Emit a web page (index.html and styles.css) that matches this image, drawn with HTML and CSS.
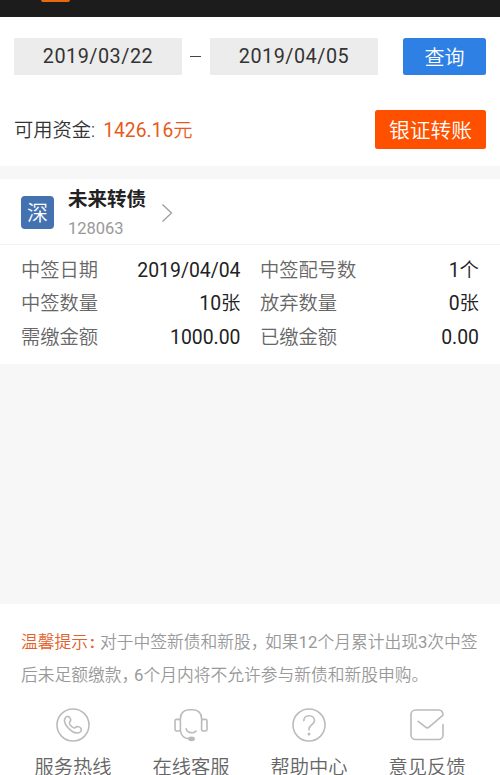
FILE: index.html
```html
<!DOCTYPE html>
<html lang="zh-CN">
<head>
<meta charset="utf-8">
<title>中签查询</title>
<link rel="stylesheet" href="styles.css">
</head>
<body>
<header class="topbar"><span class="topbar-mark"></span></header>
<main>
  <section class="query">
    <div class="dates">
      <span class="date">2019/03/22</span>
      <span class="dash"></span>
      <span class="date">2019/04/05</span>
      <button class="btn btn-query">查询</button>
    </div>
    <div class="funds">
      <span class="funds-label">可用资金:</span>
      <span class="funds-value"><span class="num">1426.16</span>元</span>
      <button class="btn btn-transfer">银证转账</button>
    </div>
  </section>
  <section class="card">
    <div class="stock">
      <span class="market">深</span>
      <div class="stock-text">
        <span class="stock-name">未来转债</span>
        <span class="stock-code">128063</span>
      </div>
      <svg class="chevron" width="12" height="20" viewBox="0 0 12 20"><path d="M1.5 1.5 10.5 10 1.5 18.5"/></svg>
    </div>
    <div class="details">
      <div class="item"><span>中签日期</span><b><span class="num">2019/04/04</span></b></div>
      <div class="item"><span>中签配号数</span><b><span class="num">1</span>个</b></div>
      <div class="item"><span>中签数量</span><b><span class="num">10</span>张</b></div>
      <div class="item"><span>放弃数量</span><b><span class="num">0</span>张</b></div>
      <div class="item"><span>需缴金额</span><b><span class="num">1000.00</span></b></div>
      <div class="item"><span>已缴金额</span><b><span class="num">0.00</span></b></div>
    </div>
  </section>
</main>
<footer class="footer">
  <p class="tip"><span class="tip-title">温馨提示<i>:</i></span>对于中签新债和新股<span class="comma">，</span>如果<span class="num">12</span>个月累计出现<span class="num">3</span>次中签<br>后未足额缴款<span class="comma comma-tight">，</span><span class="num">6</span>个月内将不允许参与新债和新股申购。</p>
  <nav class="links">
    <a class="link">
      <svg width="36" height="36" viewBox="0 0 36 36"><circle cx="18" cy="18" r="16"/><path d="M10.2 10.8C11.2 9.2 13.6 8.8 14.8 10.6 16 12.3 16.2 13.5 14.9 14.8 14 15.8 14.2 16.6 15.1 17.9 16.2 19.5 17.6 20.6 19 21 20.2 21.3 20.7 19.9 22 19.6 23.5 19.4 25.7 20.7 26.3 22.2 26.8 24 24.8 25.8 22.8 26 19.4 26.2 15.2 23.5 12.6 20.3 10.2 17.3 8.6 13.4 10.2 10.8Z"/></svg>
      <span>服务热线</span>
    </a>
    <a class="link">
      <svg width="36" height="36" viewBox="0 0 36 36"><rect x="2" y="12.4" width="5.4" height="11.6" rx="1.6"/><rect x="28.6" y="12.4" width="5.4" height="11.6" rx="1.6"/><path d="M7.4 13V11.5C7.4 6.3 11 2.7 15.8 2.7H20.2C25 2.7 28.6 6.3 28.6 11.5V13M7.4 23.5C8.1 28.4 11 31.5 16 31.8"/><path d="M13.2 21.8C14.2 26.4 21.4 26.7 23 24"/><ellipse class="mic" cx="18.5" cy="31.8" rx="2.7" ry="1.6"/></svg>
      <span>在线客服</span>
    </a>
    <a class="link">
      <svg width="36" height="36" viewBox="0 0 36 36"><circle cx="18" cy="18" r="16"/><path d="M12.8 13.8C12.8 10.8 14.9 8.7 18 8.7S23.5 10.9 23.5 13.7C23.5 17.7 18 17.8 18 22.3V23"/><circle class="mic" cx="18" cy="27.1" r=".7"/></svg>
      <span>帮助中心</span>
    </a>
    <a class="link">
      <svg width="36" height="36" viewBox="0 0 36 36"><path d="M34 17.5V28A4.5 4.5 0 0 1 29.5 32.5H6.5A4.5 4.5 0 0 1 2 28V7.5A4.5 4.5 0 0 1 6.5 3H29.5C32.5 3 34 5 34 8.2L20 20.2Q18.3 21.6 16.6 20.2L9.2 14.4"/></svg>
      <span>意见反馈</span>
    </a>
  </nav>
</footer>
</body>
</html>
```
FILE: styles.css
```css
* { box-sizing: border-box; }

body {
  margin: 0;
  height: 775px;
  overflow: hidden;
  display: flex;
  flex-direction: column;
  background: #f7f7f8;
  color: #333;
  font-family: Roboto, "Noto Sans CJK SC", sans-serif;
  font-size: 19.3px;
  font-weight: 350;
}

.num { font-weight: 400; }

.topbar {
  flex: none;
  height: 17px;
  padding-left: 41px;
  background: #1c1c1c;
}

.topbar-mark {
  display: block;
  width: 29px;
  height: 2px;
  border-radius: 0 0 6px 6px;
  background: #e66a0c;
}

.query {
  height: 149px;
  padding: 21px 14px 0;
  background: #fff;
}

.dates, .funds { display: flex; align-items: center; }

.date {
  width: 168px;
  height: 37px;
  background: #ececec;
  font-size: 19.8px;
  font-weight: 400;
  letter-spacing: .5px;
  line-height: 37px;
  text-align: center;
}

.dash {
  width: 11px;
  height: 1.5px;
  margin: 0 9px 0 8px;
  background: #444;
}

.btn {
  margin: 0 0 0 auto;
  padding: 0;
  border: 0;
  border-radius: 2.5px;
  color: #fff;
  font: inherit;
}

.btn-query {
  width: 83px;
  height: 37px;
  background: #2f80e4;
  font-size: 20px;
}

.btn-transfer {
  width: 111px;
  height: 39px;
  padding-bottom: 2px;
  background: #ff5000;
  font-size: 20.8px;
}

.funds { margin-top: 35px; }

.funds-label, .funds-value { margin-bottom: 1px; }

.funds-value {
  margin-left: 8px;
  color: #e85a1c;
}

.card {
  height: 185px;
  margin-top: 13px;
  background: #fff;
}

.stock {
  display: flex;
  align-items: center;
  height: 66px;
  padding-left: 21px;
  border-bottom: 1px solid #f2f2f2;
}

.market {
  width: 33px;
  height: 33px;
  margin-top: 2px;
  border-radius: 4px;
  background: #4472b0;
  color: #fff;
  font-size: 21px;
  line-height: 34px;
  text-align: center;
}

.stock-text {
  display: flex;
  flex-direction: column;
  width: 80px;
  margin: 3px 0 0 14px;
}

.stock-name {
  color: #222;
  font-size: 19.5px;
  font-weight: 700;
  line-height: 30px;
}

.stock-code {
  color: #999;
  font-size: 16.5px;
  font-weight: 400;
  line-height: 27px;
}

.chevron {
  margin: 3px 0 0 13px;
  fill: none;
  stroke: #999;
  stroke-width: 1.2;
}

.details {
  display: grid;
  grid-template-columns: 219.5px 219px;
  grid-auto-rows: 33.3px;
  column-gap: 19.5px;
  padding: 9px 21px 0;
}

.item {
  display: flex;
  justify-content: space-between;
  line-height: 34px;
  color: #666;
}

.item b {
  color: #222;
  font-size: 19.4px;
  font-weight: 350;
}

.footer {
  flex: none;
  height: 171px;
  margin-top: auto;
  padding-top: 22px;
  background: #fff;
}

.tip {
  margin: 0;
  padding-left: 21px;
  color: #999;
  font-size: 16.75px;
  line-height: 33px;
  white-space: nowrap;
}

.tip-title {
  display: inline-block;
  width: 79px;
  color: #e4602a;
}

.tip-title i {
  margin-left: 2px;
  font-style: normal;
  font-weight: 700;
}

.comma { letter-spacing: -2.5px; }

.comma-tight { letter-spacing: -4.3px; }

.links {
  display: grid;
  grid-template-columns: repeat(4, 118px);
  margin: 15px 0 0 14px;
}

.link {
  display: flex;
  flex-direction: column;
  align-items: center;
  color: #666;
  line-height: 30px;
}

.link svg {
  flex: none;
  margin-bottom: 10px;
  fill: none;
  stroke: #bbb;
  stroke-width: 1.6;
  stroke-linecap: round;
  stroke-linejoin: round;
}

.link .mic { fill: #bbb; }
```
